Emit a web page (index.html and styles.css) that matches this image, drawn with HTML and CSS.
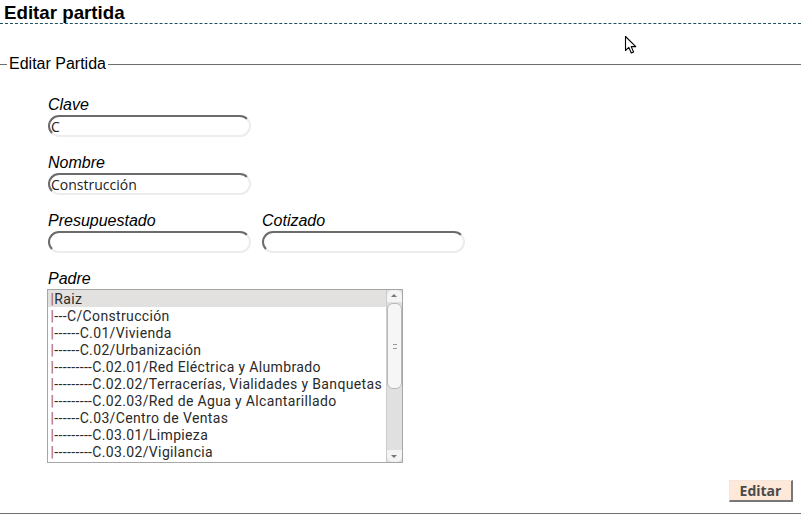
FILE: index.html
```html
<!DOCTYPE html>
<html lang="es">
<head>
<meta charset="utf-8">
<title>Editar partida</title>
<link rel="stylesheet" href="styles.css">
</head>
<body>
<h2 class="page-title">Editar partida</h2>
<svg class="cursor" width="14" height="20" viewBox="0 0 14 20"><path d="M1.5 1.5 L1.5 15.5 L4.8 12.4 L7.3 18 L9.6 17 L7.2 11.6 L11.8 11.6 Z" fill="#fff" stroke="#000" stroke-width="1.1" stroke-linejoin="round"/></svg>
<form class="edit-form">
  <fieldset class="box">
    <legend class="box-legend">Editar Partida</legend>
    <div class="form-body">
      <div class="field">
        <label class="field-label">Clave</label>
        <input class="text-input" type="text" value="C">
      </div>
      <div class="field">
        <label class="field-label">Nombre</label>
        <input class="text-input" type="text" value="Construcción">
      </div>
      <div class="field-row">
        <div class="field">
          <label class="field-label">Presupuestado</label>
          <input class="text-input" type="text" value="">
        </div>
        <div class="field">
          <label class="field-label">Cotizado</label>
          <input class="text-input" type="text" value="">
        </div>
      </div>
      <div class="field field-last">
        <label class="field-label">Padre</label>
        <div class="listbox">
          <ul class="options">
            <li class="option selected"><span class="pipe">|</span>Raiz</li>
            <li class="option"><span class="pipe">|</span>---C/Construcción</li>
            <li class="option"><span class="pipe">|</span>------C.01/Vivienda</li>
            <li class="option"><span class="pipe">|</span>------C.02/Urbanización</li>
            <li class="option"><span class="pipe">|</span>---------C.02.01/Red Eléctrica y Alumbrado</li>
            <li class="option"><span class="pipe">|</span>---------C.02.02/Terracerías, Vialidades y Banquetas</li>
            <li class="option"><span class="pipe">|</span>---------C.02.03/Red de Agua y Alcantarillado</li>
            <li class="option"><span class="pipe">|</span>------C.03/Centro de Ventas</li>
            <li class="option"><span class="pipe">|</span>---------C.03.01/Limpieza</li>
            <li class="option"><span class="pipe">|</span>---------C.03.02/Vigilancia</li>
          </ul>
          <div class="scrollbar">
            <div class="sb-arrow sb-up"></div>
            <div class="sb-thumb"><span class="grip"></span></div>
            <div class="sb-track"></div>
            <div class="sb-arrow sb-down"></div>
          </div>
        </div>
      </div>
    </div>
    <div class="actions">
      <button class="btn" type="button">Editar</button>
    </div>
  </fieldset>
</form>
</body>
</html>
```

FILE: styles.css
```css
html, body {
  margin: 0;
  padding: 0;
  background: #fff;
}
body {
  font-family: "Liberation Sans", Arial, sans-serif;
  color: #000;
  position: relative;
  width: 801px;
  height: 514px;
  overflow: hidden;
}
.page-title {
  margin: 0;
  padding: 3px 4px 1px 4px;
  font-size: 18.72px;
  line-height: 19px;
  font-weight: bold;
  border-bottom: 1px dashed #1f4f63;
}
.cursor {
  position: absolute;
  left: 624px;
  top: 35px;
}
.edit-form {
  margin: 31px 0 0 0;
}
.box {
  margin: 0;
  padding: 0 0 11px 7px;
  border: none;
  border-top: 1px solid #6e6e6e;
  border-bottom: 1px solid #6e6e6e;
  min-width: 0;
}
.box-legend {
  padding: 0 2px;
  font-size: 16px;
  line-height: 18px;
}
.form-body {
  padding: 23px 0 0 41px;
}
.field {
  margin-bottom: 17px;
}
.field-last {
  margin-bottom: 0;
}
.field-row {
  display: flex;
  gap: 11px;
}
.field-label {
  display: block;
  font-style: italic;
  font-size: 16px;
  line-height: 18px;
  margin-bottom: 1px;
}
.text-input {
  box-sizing: border-box;
  display: block;
  width: 203px;
  height: 22px;
  margin: 0;
  padding: 0 0 0 1px;
  border: 2px solid;
  border-color: #6b6b6b #ececec #ececec #6b6b6b;
  border-radius: 11px;
  font-family: "Open Sans", "DejaVu Sans", sans-serif;
  font-size: 14px;
  color: #222;
  background: #fff;
  outline: none;
}
.listbox {
  display: flex;
  box-sizing: border-box;
  width: 356px;
  height: 174px;
  margin: 1px 0 0 -1px;
  border: 1px solid #a6a6a6;
  background: #fff;
  overflow: hidden;
}
.options {
  flex: 1;
  list-style: none;
  margin: 0;
  padding: 0;
  font-family: Roboto, "DejaVu Sans", sans-serif;
  font-size: 14px;
  letter-spacing: 0.35px;
  color: #2a2a2a;
}
.option {
  height: 16px;
  line-height: 16px;
  padding: 1px 0 0 2.5px;
  white-space: nowrap;
}
.option.selected {
  background: #e2e1df;
}
.pipe {
  color: #b0601f;
  font-weight: 500;
}
.scrollbar {
  width: 15px;
  display: flex;
  flex-direction: column;
  background: #e0e0e0;
  border-left: 1px solid #cdcdcd;
}
.sb-arrow {
  height: 12px;
  position: relative;
  background: #f4f4f4;
}
.sb-up {
  border-radius: 6px 6px 0 0;
}
.sb-down {
  border-radius: 0 0 6px 6px;
}
.sb-up::after, .sb-down::after {
  content: "";
  position: absolute;
  left: 4px;
  border-left: 3px solid transparent;
  border-right: 3px solid transparent;
}
.sb-up::after {
  top: 4px;
  border-bottom: 3px solid #777;
}
.sb-down::after {
  top: 5px;
  border-top: 3px solid #777;
}
.sb-thumb {
  height: 86px;
  margin: 1px 0 0 0;
  background: #f6f6f6;
  border: 1px solid #b9b9b9;
  border-radius: 6px;
  box-sizing: border-box;
  display: flex;
  align-items: center;
  justify-content: center;
}
.grip {
  width: 4px;
  height: 5px;
  border-top: 1px solid #999;
  border-bottom: 1px solid #999;
  box-sizing: border-box;
}
.sb-track {
  flex: 1;
}
.actions {
  display: flex;
  justify-content: flex-end;
  padding: 17px 8px 0 0;
}
.btn {
  box-sizing: border-box;
  height: 22px;
  width: 64px;
  margin: 0;
  padding: 0;
  font-family: "Open Sans", "DejaVu Sans", sans-serif;
  font-weight: bold;
  font-size: 14px;
  color: #4a4a4a;
  background: #fde8d9;
  border: 1px solid;
  border-color: #f3e6dc #777 #777 #f3e6dc;
  border-width: 1px 2px 2px 1px;
}
```
